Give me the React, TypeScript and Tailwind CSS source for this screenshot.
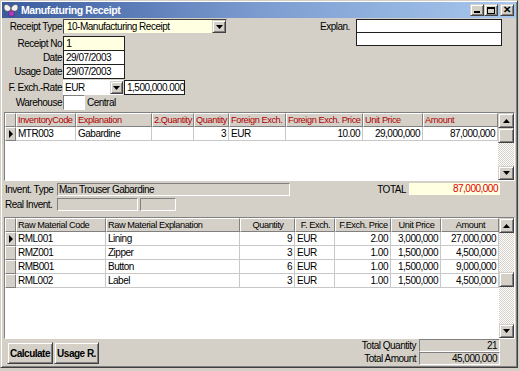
import React from "react";

const raised = "border border-t-white border-l-white border-r-[#808080] border-b-[#808080]";
const sunken = "border border-t-[#808080] border-l-[#808080] border-r-white border-b-white";

const Tri = ({ dir }: { dir: "up" | "down" | "right" }) => {
    const pts = dir === "up" ? "0,4 7,4 3.5,0" : dir === "down" ? "0,0 7,0 3.5,4" : "0,0 0,8 4,4";
    const w = dir === "right" ? 4 : 7;
    const h = dir === "right" ? 8 : 4;
    return (
        <svg width={w} height={h} viewBox={`0 0 ${w} ${h}`}>
            <polygon points={pts} fill="#000" />
        </svg>
    );
};

const BevelBtn = ({ className, children }: { className: string; children?: React.ReactNode }) => (
    <div
        className={`${className} bg-[#d4d0c8] border border-t-[#d4d0c8] border-l-[#d4d0c8] border-r-[#404040] border-b-[#404040] shadow-[inset_1px_1px_white,inset_-1px_-1px_#808080] flex items-center justify-center`}
    >
        {children}
    </div>
);

type Col = { w: number; label: string; align: "left" | "right"; head: "left" | "center" };

const Grid = ({
    cols,
    rows,
    height,
    headColor,
    thumbTop,
}: {
    cols: Col[];
    rows: string[][];
    height: number;
    headColor: string;
    thumbTop: number;
}) => (
    <div className={`ml-[2px] w-[511px] ${sunken} border-t-[#404040] border-l-[#404040] flex`} style={{ height }}>
        <div className="flex-1 bg-white flex flex-col">
            <div className="flex h-[14px] bg-[#d4d0c8]">
                <div className={`w-[11px] ${raised}`} />
                {cols.map((c) => (
                    <div
                        key={c.label}
                        className={`${raised} pl-px text-[9.2px] tracking-[-0.4px] leading-[12px] overflow-hidden ${headColor} ${c.head === "center" ? "text-center" : "text-left"}`}
                        style={{ width: c.w }}
                    >
                        {c.label}
                    </div>
                ))}
            </div>
            {rows.map((r, i) => (
                <div key={i} className="flex h-[14px]">
                    <div className={`w-[11px] bg-[#d4d0c8] ${raised} flex items-center justify-center`}>
                        {i === 0 && <Tri dir="right" />}
                    </div>
                    {r.map((v, j) => (
                        <div
                            key={j}
                            className={`border-r border-b border-[#c8c8c8] px-[2px] leading-[13px] overflow-hidden ${cols[j].align === "right" ? "text-right" : "text-left"}`}
                            style={{ width: cols[j].w }}
                        >
                            {v}
                        </div>
                    ))}
                </div>
            ))}
        </div>
        <div className="w-[16px] bg-[repeating-conic-gradient(#d4d0c8_0%_25%,#ffffff_0%_50%)] bg-[length:2px_2px] flex flex-col">
            <BevelBtn className="h-[15px]">
                <Tri dir="up" />
            </BevelBtn>
            <div style={{ height: thumbTop }} />
            <BevelBtn className="h-[15px]" />
            <div className="flex-1" />
            <BevelBtn className="h-[14px]">
                <Tri dir="down" />
            </BevelBtn>
        </div>
    </div>
);

const cols1: Col[] = [
    { w: 60, label: "InventoryCode", align: "left", head: "left" },
    { w: 76, label: "Explanation", align: "left", head: "left" },
    { w: 42, label: "2.Quantity", align: "right", head: "left" },
    { w: 35, label: "Quantity", align: "right", head: "left" },
    { w: 57, label: "Foreign Exch.", align: "left", head: "left" },
    { w: 77, label: "Foreign Exch. Price", align: "right", head: "left" },
    { w: 60, label: "Unit Price", align: "right", head: "left" },
    { w: 75, label: "Amount", align: "right", head: "left" },
];

const cols2: Col[] = [
    { w: 90, label: "Raw Material Code", align: "left", head: "left" },
    { w: 134, label: "Raw Material Explanation", align: "left", head: "left" },
    { w: 55, label: "Quantity", align: "right", head: "center" },
    { w: 40, label: "F. Exch.", align: "left", head: "center" },
    { w: 56, label: "F.Exch. Price", align: "right", head: "center" },
    { w: 50, label: "Unit Price", align: "right", head: "center" },
    { w: 58, label: "Amount", align: "right", head: "center" },
];

const rows2 = [
    ["RML001", "Lining", "9", "EUR", "2.00", "3,000,000", "27,000,000"],
    ["RMZ001", "Zipper", "3", "EUR", "1.00", "1,500,000", "4,500,000"],
    ["RMB001", "Button", "6", "EUR", "1.00", "1,500,000", "9,000,000"],
    ["RML002", "Label", "3", "EUR", "1.00", "1,500,000", "4,500,000"],
];

const App: React.FC = () => {
    return (
        <div className="w-[520px] h-[371px] bg-[#d4d0c8] text-[10px] tracking-[-0.5px] leading-[13px] whitespace-nowrap text-black font-['Liberation_Sans',Arial,sans-serif] overflow-hidden">
            <div className="w-[518px] h-[368px] p-px border border-t-[#d4d0c8] border-l-[#d4d0c8] border-r-[#404040] border-b-[#404040] shadow-[inset_1px_1px_white,inset_-1px_-1px_#808080] flex flex-col">
                {/* Title bar */}
                <div className="h-[16px] bg-gradient-to-r from-[#3a5c9e] via-[#7c9cd0] to-[#a8c8ee] flex items-center pl-[1px] pr-[2px]">
                    <svg width="16" height="14" viewBox="0 0 16 14">
                        <path d="M8 5 C5 0 1 1 1 4 C1 8 4 9 7 8 Z" fill="#f0f0f0" stroke="#606060" strokeWidth="0.8" />
                        <path d="M8 5 C11 0 15 1 15 4 C15 8 12 9 9 8 Z" fill="#f0f0f0" stroke="#606060" strokeWidth="0.8" />
                        <rect x="6" y="8" width="5" height="5" fill="#b040c0" stroke="#602070" strokeWidth="0.6" />
                    </svg>
                    <span className="ml-[2px] text-white font-bold text-[10.5px] tracking-[-0.4px]">Manufaturing Receipt</span>
                    <div className="ml-auto flex">
                        <BevelBtn className="w-[14px] h-[12px] items-end pb-[2px]">
                            <div className="w-[6px] h-[2px] bg-black" />
                        </BevelBtn>
                        <BevelBtn className="w-[14px] h-[12px]">
                            <div className="w-[8px] h-[7px] border border-black border-t-2" />
                        </BevelBtn>
                        <BevelBtn className="ml-[2px] w-[14px] h-[12px] text-[10px] font-bold leading-none">
                            ✕
                        </BevelBtn>
                    </div>
                </div>

                {/* Header form */}
                <div className="flex">
                    <div className="w-[225px] flex flex-col">
                        <div className="flex h-[15px] mt-[1px] items-center">
                            <span className="w-[61px] text-right pr-px">Receipt Type</span>
                            <div className="w-[164px] h-[15px] border border-t-[#404040] border-l-[#404040] border-r-[#d4d0c8] border-b-[#d4d0c8] bg-[#ffffe1] flex items-center justify-between pl-[3px]">
                                <span>10-Manufacturing Receipt</span>
                                <BevelBtn className="w-[14px] h-[13px]">
                                    <Tri dir="down" />
                                </BevelBtn>
                            </div>
                        </div>
                        <div className="flex h-[15px] mt-[2px] items-center">
                            <span className="w-[61px] text-right pr-px">Receipt No</span>
                            <div className="w-[62px] h-[15px] border border-[#202020] bg-[#ffffe1] pl-[2px] text-[11px] font-medium">1</div>
                        </div>
                        <div className="flex h-[15px] -mt-px items-center">
                            <span className="w-[61px] text-right pr-px">Date</span>
                            <div className="w-[62px] h-[15px] border border-[#202020] bg-white pl-[2px]">29/07/2003</div>
                        </div>
                        <div className="flex h-[15px] -mt-px items-center">
                            <span className="w-[61px] text-right pr-px">Usage Date</span>
                            <div className="w-[62px] h-[15px] border border-[#202020] bg-white pl-[2px]">29/07/2003</div>
                        </div>
                        <div className="flex h-[15px] mt-[1px] items-center">
                            <span className="w-[61px] text-right pr-px">F. Exch.-Rate</span>
                            <div className="w-[60px] h-[15px] bg-white flex items-center justify-between pl-[2px]">
                                <span>EUR</span>
                                <BevelBtn className="w-[13px] h-[13px]">
                                    <Tri dir="down" />
                                </BevelBtn>
                            </div>
                            <div className="ml-px w-[61px] h-[15px] border border-[#202020] bg-white pl-[2px]">1,500,000.000</div>
                        </div>
                        <div className="flex h-[15px] items-center">
                            <span className="w-[61px] text-right pr-px">Warehouse</span>
                            <div className={`w-[22px] h-[15px] bg-white ${sunken}`} />
                            <span className="ml-[2px]">Central</span>
                        </div>
                    </div>
                    <div className="ml-[93px] flex mt-[1px]">
                        <span className="w-[27px] text-right mt-[1px]">Explan.</span>
                        <div className="ml-[9px] flex flex-col">
                            <div className="w-[146px] h-[14px] border border-[#202020] bg-white" />
                            <div className="w-[146px] h-[14px] -mt-px border border-[#202020] bg-white" />
                        </div>
                    </div>
                </div>

                {/* Upper grid */}
                <div className="mt-[2px]">
                    <Grid
                        cols={cols1}
                        rows={[["MTR003", "Gabardine", "", "3", "EUR", "10.00", "29,000,000", "87,000,000"]]}
                        height={69}
                        headColor="text-[#b00000]"
                        thumbTop={0}
                    />
                </div>

                {/* Middle info */}
                <div className="flex mt-[2px]">
                    <div className="flex flex-col">
                        <div className="flex items-center h-[13px]">
                            <span className="w-[55px] pl-[3px]">Invent. Type</span>
                            <div className={`w-[233px] h-[13px] ${sunken} pl-[1px] leading-[11px]`}>Man Trouser Gabardine</div>
                        </div>
                        <div className="flex items-center h-[13px] mt-[2px]">
                            <span className="w-[55px] pl-[3px]">Real Invent.</span>
                            <div className={`w-[81px] h-[13px] ${sunken}`} />
                            <div className={`ml-[2px] w-[36px] h-[13px] ${sunken}`} />
                        </div>
                    </div>
                    <div className="ml-auto mr-[16px] flex items-start">
                        <span className="mr-[3px]">TOTAL</span>
                        <div className="w-[91px] h-[12px] bg-[#ffffe1] text-[#e00000] text-right pr-[2px] leading-[12px]">87,000,000</div>
                    </div>
                </div>

                {/* Lower grid */}
                <div className="mt-[6px]">
                    <Grid cols={cols2} rows={rows2} height={122} headColor="text-black" thumbTop={39} />
                </div>

                {/* Footer */}
                <div className="flex">
                    <div className="flex mt-[3px] ml-[5px] gap-px">
                        <BevelBtn className="w-[46px] h-[22px] font-bold">Calculate</BevelBtn>
                        <BevelBtn className="w-[45px] h-[22px] font-bold">Usage R.</BevelBtn>
                    </div>
                    <div className="ml-auto mr-[16px] flex flex-col">
                        <div className="flex items-center h-[13px] justify-end">
                            <span className="mr-[3px]">Total Quantity</span>
                            <div className={`w-[81px] h-[13px] ${sunken} text-right pr-[2px] leading-[11px]`}>21</div>
                        </div>
                        <div className="flex items-center h-[13px] justify-end">
                            <span className="mr-[3px]">Total Amount</span>
                            <div className={`w-[81px] h-[13px] ${sunken} text-right pr-[2px] leading-[11px]`}>45,000,000</div>
                        </div>
                    </div>
                </div>
            </div>
        </div>
    );
};

export default App;
